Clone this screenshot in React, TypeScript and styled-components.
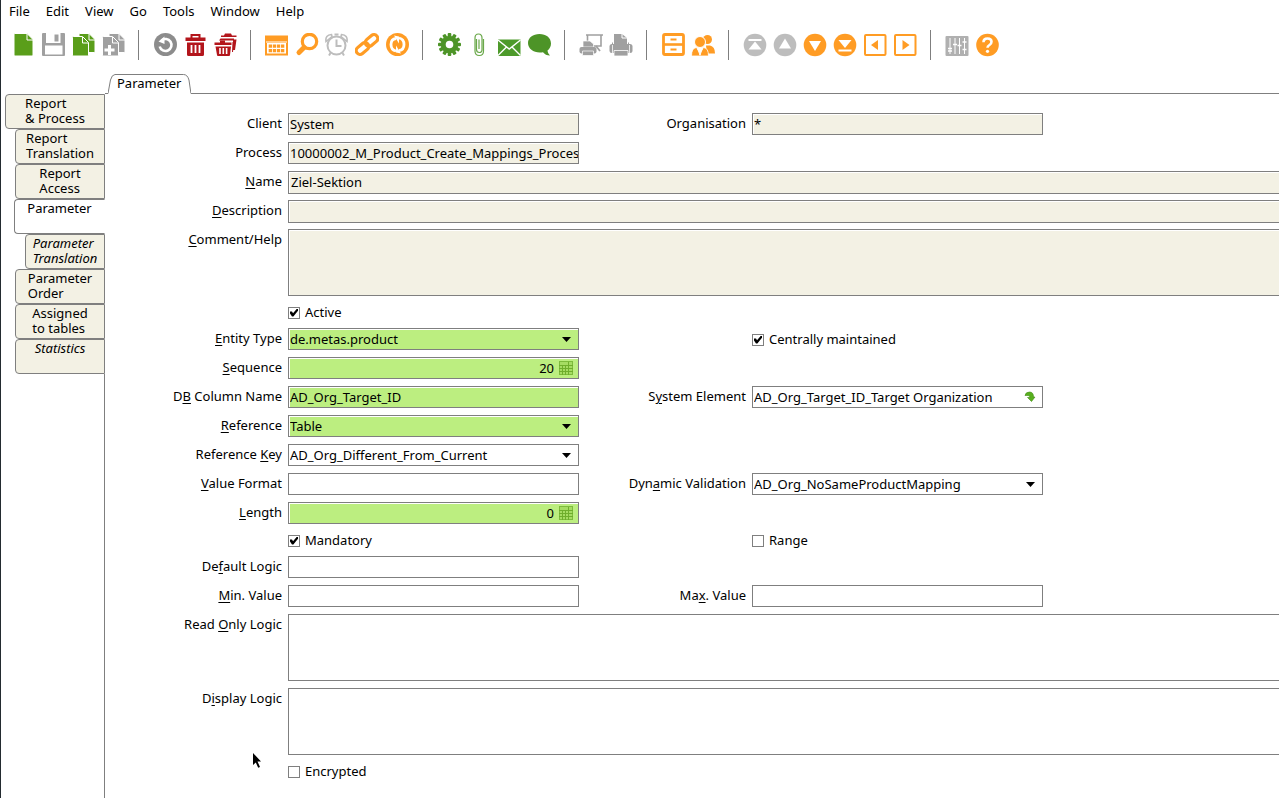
import React, { useId } from "react";
import styled, { createGlobalStyle, css } from "styled-components";

const GREEN = "#5a9e1a";
const ORANGE = "#ff9c24";
const RED = "#b3151b";
const GREY = "#a0a0a0";
const PALE = "#bdbdbd";
const LINE = "#7f7f7f";
const BEIGE = "#f3f1e4";
const LIME = "#bcee80";

const GlobalStyle = createGlobalStyle`
  *, *::before, *::after { box-sizing: border-box; }
  body { margin: 0; background: #fff; overflow-x: hidden; }
  body, button, input, select, textarea {
    font-family: "Noto Sans", "DejaVu Sans", sans-serif;
    font-size: 13px;
    line-height: 15px;
    color: #000;
  }
  u { text-underline-offset: 2px; text-decoration-thickness: 1px; }
`;

const Shell = styled.div`
  display: flex;
  flex-direction: column;
  min-height: 100vh;
  border-left: 1px solid #232b30;
`;

const MenuBar = styled.nav`
  display: flex;
  height: 24px;
`;

const MenuItem = styled.button`
  border: 0;
  background: none;
  padding: 0 8px 2px;
`;

const Toolbar = styled.div`
  display: flex;
  padding: 6px 7px 14px;
`;

const ToolButton = styled.button`
  flex: none;
  display: grid;
  place-items: center;
  width: 30px;
  height: 30px;
  padding: 0;
  border: 0;
  background: none;
`;

const Separator = styled.div`
  flex: none;
  width: 1px;
  height: 30px;
  margin: 0 11px 0 10px;
  background: ${LINE};
`;

const Body = styled.div`
  flex: 1;
  display: flex;
`;

const SideTabs = styled.nav`
  flex: none;
  display: flex;
  flex-direction: column;
  width: 104px;
  padding-top: 20px;
`;

const SideTab = styled.button<{ $indent: number; $active?: boolean; $italic?: boolean }>`
  flex: none;
  display: flex;
  justify-content: center;
  align-items: flex-start;
  height: 35px;
  margin-left: ${(p) => p.$indent}px;
  padding: 1px 0 0;
  border: 1px solid ${LINE};
  border-right-color: ${(p) => (p.$active ? "transparent" : LINE)};
  border-radius: 4px 0 0 4px;
  background: ${(p) => (p.$active ? "#fff" : BEIGE)};
  font-style: ${(p) => (p.$italic ? "italic" : "normal")};
  text-align: left;
  white-space: pre-line;
`;

const SideRule = styled.div`
  flex: 1;
  border-right: 1px solid ${LINE};
`;

const Panel = styled.main`
  flex: 1;
  min-width: 0;
`;

const TabRow = styled.div`
  display: flex;
  height: 20px;
`;

const TabLine = styled.div<{ $grow?: boolean }>`
  flex: ${(p) => (p.$grow ? "1" : "none")};
  width: 3px;
  border-bottom: 1px solid ${LINE};
`;

const TopTab = styled.button`
  position: relative;
  flex: none;
  padding: 0 10px 2px 9px;
  border: 0;
  background: none;
`;

const TabShape = styled.svg`
  position: absolute;
  inset: 0;
  width: 100%;
  height: 100%;
`;

const Form = styled.form`
  display: grid;
  grid-template-columns: 177px 291px 161px 291px minmax(0, 1fr);
  grid-auto-rows: auto;
  gap: 6px;
  padding: 19px 0 12px;
`;

const Label = styled.label<{ $second?: boolean }>`
  grid-column: ${(p) => (p.$second ? 3 : 1)};
  height: 23px;
  line-height: 20px;
  text-align: right;
  white-space: nowrap;
`;

const fieldFrame = css<{ $fill?: string; $second?: boolean; $wide?: boolean }>`
  grid-column: ${(p) => (p.$wide ? "2 / -1" : p.$second ? "4" : "2")};
  width: 100%;
  height: 22px;
  border: 1px solid ${LINE};
  border-radius: 0;
  background: ${(p) => p.$fill ?? "#fff"};
  box-shadow: inset 1px 1px 0 #fff;
  ${(p) => p.$wide && "border-right: 0;"}
`;

const TextInput = styled.input<{ $fill?: string; $second?: boolean; $wide?: boolean }>`
  ${fieldFrame}
  height: ${(p) => (p.$wide ? 23 : 22)}px;
  padding: ${(p) => (p.$wide ? "0 0 2px 2px" : "0 0 0 1px")};
  outline: 0;
`;

const TextBox = styled.textarea<{ $fill?: string }>`
  ${fieldFrame}
  grid-column: 2 / -1;
  height: 67px;
  margin-bottom: 1px;
  border-right: 0;
  resize: none;
  display: block;
`;

const Composite = styled.div<{ $fill?: string; $second?: boolean }>`
  ${fieldFrame}
  position: relative;
  display: flex;
`;

const InnerInput = styled.input<{ $right?: boolean }>`
  flex: 1;
  min-width: 0;
  padding: 0 4px 0 1px;
  border: 0;
  outline: 0;
  background: none;
  text-align: ${(p) => (p.$right ? "right" : "left")};
`;

const FieldButton = styled.button`
  flex: none;
  display: grid;
  place-items: center;
  width: 16px;
  margin-right: 4px;
  padding: 0;
  border: 0;
  background: none;
`;

const InnerSelect = styled.select`
  flex: 1;
  min-width: 0;
  padding: 0 24px 0 1px;
  border: 0;
  border-radius: 0;
  outline: 0;
  background: none;
  appearance: none;
`;

const Arrow = styled.svg`
  position: absolute;
  top: 8px;
  right: 7px;
  pointer-events: none;
`;

const CheckLabel = styled.label<{ $second?: boolean }>`
  grid-column: ${(p) => (p.$second ? 4 : 2)};
  align-self: center;
  display: flex;
  align-items: center;
  gap: 5px;
  height: 19px;
`;

const CheckInput = styled.input`
  appearance: none;
  flex: none;
  display: grid;
  place-items: center;
  width: 12px;
  height: 12px;
  margin: 0;
  border: 1px solid ${LINE};
  background: #fff;
  &:checked::before {
    content: "";
    width: 8px;
    height: 8px;
    background: #000;
    clip-path: polygon(0 38%, 25% 38%, 38% 58%, 88% 0, 100% 0, 100% 28%, 42% 100%, 25% 100%, 0 62%);
  }
`;

const Pointer = styled.svg`
  position: absolute;
  left: 252px;
  top: 753px;
  pointer-events: none;
`;

const page = (x: number, y: number, w: number, h: number, fill: string) => (
  <>
    <path d={`M${x + 1} ${y}h${w - 7}l6 6v${h - 7}q0 1-1 1h${-(w - 2)}q-1 0-1-1v${-(h - 2)}q0-1 1-1z`} fill={fill} stroke="#fff" />
    <path d={`M${x + w - 6} ${y + 0.5}v6h6`} fill="none" stroke="#fff" />
  </>
);

const teeth = (n: number, cx: number, cy: number, color: string) =>
  Array.from({ length: n }, (_, i) => (
    <rect key={i} x={cx - 1.8} y={cy - 11.5} width="3.6" height="6" rx="1" fill={color} transform={`rotate(${(360 / n) * i} ${cx} ${cy})`} />
  ));

const printer = (
  <>
    <path d="M5 11V1h8l5 4v6z" fill={GREY} />
    <path d="M13 1v4h5" fill="none" stroke="#fff" />
    <path d="M3.500 9.500v3M19.500 9.500v3" stroke={GREY} />
    <rect x="0.500" y="11" width="23" height="9" rx="2.500" fill={GREY} />
    <path d="M3.500 12v8M20.500 12v8" stroke="#e8e8e8" />
    <path d="M5 17.500h14v5.500H5z" fill={GREY} stroke="#fff" strokeWidth="0.800" />
  </>
);

const icons: Record<string, React.ReactNode> = {
  New: page(3, 0.5, 19, 22.5, GREEN),
  Save: (
    <>
      <rect x="1" y="0" width="23" height="23" rx="1" fill={GREY} />
      <path d="M5 0h14.500v10H5zM4 12.500h17.500v9H4z" fill="#fff" />
      <path d="M13.500 1.500h4v7h-4z" fill={GREY} />
    </>
  ),
  Copy: (
    <>
      {page(8, 0.5, 16, 19, GREEN)}
      {page(1.5, 3.5, 16, 19.5, GREEN)}
    </>
  ),
  "Copy record": (
    <>
      {page(8, 0.5, 16, 19, GREY)}
      {page(1.5, 3.5, 16, 19.5, GREY)}
      <path d="M8.500 12v10M3.500 17h10" stroke="#fff" strokeWidth="3" />
    </>
  ),
  Undo: (
    <>
      <circle cx="12.500" cy="11.500" r="11.500" fill="#8c8c8c" />
      <path d="M8.500 7.500a6 6 0 1 1-1.800 6" fill="none" stroke="#fff" strokeWidth="2.600" />
      <path d="M5.500 8.500L11.500 3.500V11z" fill="#fff" />
    </>
  ),
  Delete: (
    <>
      <path d="M8.500 5V2h8v3" fill="none" stroke={RED} strokeWidth="2" />
      <path d="M2.500 4.500h20v3.500h-20zM4 9.500h17v12q0 1.500-1.500 1.500h-14Q4 23 4 21.500z" fill={RED} />
      <path d="M8.500 12v8M12.500 12v8M16.500 12v8" stroke="#fff" strokeWidth="1.800" />
    </>
  ),
  "Delete selection": (
    <>
      <path d="M11 2.500L12 0.500h6l1 2h4.500V4H8V2.500zM20 6.500h3.500L22 17h-2z" fill={RED} />
      <path d="M7.500 5.500h13.500v2H6zM19.500 9h1.500l-1 10h-1z" fill={RED} />
      <path d="M7 10V7.500h5V10M1.500 9.500h17V12h-17zM2.500 13.500h15.500l-1 8.500q0 1-1 1h-11q-1 0-1-1z" fill={RED} />
      <path d="M7 15v6M10.300 15v6M13.600 15v6" stroke="#fff" strokeWidth="1.600" />
    </>
  ),
  "Grid toggle": (
    <>
      <path d="M0 2.500h23v20H0zM2 10v10.500h19V10z" fill={ORANGE} fillRule="evenodd" />
      <path d="M1 9h21" stroke="#fff" />
      {[3.7, 7.8, 11.9, 16].map((x) => (
        <path key={x} d={`M${x} 11.500h3.300v3.300h-3.300zM${x} 16h3.300v3.300h-3.300z`} fill={ORANGE} />
      ))}
    </>
  ),
  Find: (
    <>
      <circle cx="14.500" cy="8.500" r="7.200" fill="none" stroke={ORANGE} strokeWidth="3.200" />
      <path d="M9 14.500L4 19.500" stroke={ORANGE} strokeWidth="5" strokeLinecap="round" />
    </>
  ),
  History: (
    <g fill="none" stroke={PALE}>
      <circle cx="11.500" cy="12.500" r="9" strokeWidth="2" />
      <path d="M11.500 6.500V13h5" strokeWidth="2" />
      <path d="M1 8.500Q0 2 6.500 1.500L7 3.500zM22 8.500Q23 2 16.500 1.500L16 3.500z" strokeWidth="1.600" />
      <path d="M5.500 20L4 22.500M17.500 20l1.500 2.500M9.500 1.500h4" strokeWidth="2" />
    </g>
  ),
  "Zoom across": (
    <g fill="none" stroke={ORANGE} strokeWidth="3.200">
      <rect x="-7" y="-3.800" width="14" height="7.600" rx="3.800" transform="translate(7.500 15.500) rotate(-40)" />
      <rect x="-7" y="-3.800" width="14" height="7.600" rx="3.800" transform="translate(16.500 7.500) rotate(-40)" />
    </g>
  ),
  Refresh: (
    <>
      <circle cx="12.500" cy="11.500" r="11.500" fill={ORANGE} />
      <path d="M11 18Q6 17 6 11.500T11 5.500M14 5Q19 6 19 11.500T14 17.500" fill="none" stroke="#fff" strokeWidth="2.800" />
      <path d="M9 2.500l5 1v7zM16 20.500l-5-1v-7z" fill="#fff" />
    </>
  ),
  Process: (
    <>
      {teeth(12, 12.5, 11.5, "#4d9427")}
      <circle cx="12.500" cy="11.500" r="6.300" fill="none" stroke="#4d9427" strokeWidth="5" />
    </>
  ),
  Attachment: (
    <path d="M9.500 6v10.500q0 3 2.800 3t2.700-3V5q0-4-3.500-4T8 5v13q0 4.500 4.300 4.500T16.500 18V6M12 6.500V16" fill="none" stroke="#6aa84a" strokeWidth="1.200" />
  ),
  Mail: (
    <>
      <path d="M1 6.500h22.500V23H1z" fill="#4d9a2a" />
      <path d="M1 7l11.200 9L23.500 7M1 22.500l8.500-8.500M23.500 22.500L15 14" fill="none" stroke="#fff" strokeWidth="1.400" />
    </>
  ),
  Chat: (
    <path d="M12.500 1C19 1 24 4.800 24 10.500c0 3-1.500 5.500-3.500 7 .3 2 1 3.500 2.500 5-3 0-5.500-1.300-7-3.300-8 1.500-15-2.700-15-9.200C1 4.800 6 1 12.500 1z" fill="#4d9427" />
  ),
  "Print preview": (
    <>
      <path d="M8.500 2v11h13.500V2M7 2h17" fill="none" stroke={GREY} strokeWidth="1.600" />
      <path d="M17 13l4 5" stroke={GREY} strokeWidth="1.800" />
      <path d="M4 14V8h7l3.500 3v3z" fill={GREY} stroke="#fff" strokeWidth="0.700" />
      <rect x="0.500" y="14" width="17" height="6.500" rx="2" fill={GREY} />
      <path d="M3.500 18h11v4.500h-11z" fill={GREY} stroke="#fff" strokeWidth="0.700" />
    </>
  ),
  Print: printer,
  Archive: (
    <>
      <rect x="2.500" y="1.500" width="20" height="20" rx="1.500" fill="none" stroke={ORANGE} strokeWidth="2.800" />
      <path d="M2 11.500h21" stroke={ORANGE} strokeWidth="2.600" />
      <path d="M9.500 6.500h6M9.500 16.500h6" stroke={ORANGE} strokeWidth="2" />
    </>
  ),
  "Business partner": (
    <>
      <circle cx="16.500" cy="6.500" r="4.500" fill={ORANGE} />
      <path d="M15 12.500h4q5 1 5 8h-8z" fill={ORANGE} />
      <circle cx="9" cy="9" r="5.500" fill={ORANGE} stroke="#fff" />
      <path d="M0.500 23q0-8 5-8.500L9 20l3.500-5.500q5 .5 5 8.500z" fill={ORANGE} stroke="#fff" strokeWidth="0.800" />
      <path d="M9 15.500v7M6.500 15.500L9 22l2.500-6.500" stroke="#fff" strokeWidth="0.900" fill="none" />
    </>
  ),
  First: (
    <>
      <circle cx="12" cy="12" r="11.300" fill={PALE} />
      <path d="M5.500 7h13" stroke="#fff" strokeWidth="2" />
      <path d="M12 8.500l6.500 8h-13z" fill="#fff" />
    </>
  ),
  Previous: (
    <>
      <circle cx="12" cy="12" r="11.300" fill={PALE} />
      <path d="M12 5.500l6 10H6z" fill="#fff" />
    </>
  ),
  Next: (
    <>
      <circle cx="12" cy="12" r="11.300" fill={ORANGE} />
      <path d="M12 18L6 8h12z" fill="#fff" />
    </>
  ),
  Last: (
    <>
      <circle cx="12" cy="12" r="11.300" fill={ORANGE} />
      <path d="M5.500 17.500h13" stroke="#fff" strokeWidth="2" />
      <path d="M12 15L5.500 7h13z" fill="#fff" />
    </>
  ),
  Parent: (
    <>
      <rect x="2" y="2" width="20.500" height="20" rx="1" fill="none" stroke={ORANGE} strokeWidth="2" />
      <path d="M8 12l7-5v10z" fill={ORANGE} />
    </>
  ),
  Detail: (
    <>
      <rect x="2" y="2" width="20.500" height="20" rx="1" fill="none" stroke={ORANGE} strokeWidth="2" />
      <path d="M16.500 12l-7-5v10z" fill={ORANGE} />
    </>
  ),
  Preferences: (
    <>
      <rect x="0.500" y="3" width="23" height="20" rx="1" fill="#b0b0b0" />
      <path d="M5 5v16M10 5v16M14.500 5v16M19.500 5v16" stroke="#fff" strokeWidth="1" />
      <path d="M3 15.500h4M8 11.500h4M12.500 12.500h4M17.500 16.500h4M3 18h4M17.500 9h4" stroke="#fff" strokeWidth="1.500" />
    </>
  ),
  Help: (
    <>
      <circle cx="12.500" cy="12" r="11.300" fill={ORANGE} />
      <path d="M8.500 9.300q0-3.800 4-3.800t4 3.300q0 2-2 3.200t-2 2.800" fill="none" stroke="#fff" strokeWidth="2.600" />
      <circle cx="12.500" cy="18.300" r="1.600" fill="#fff" />
    </>
  ),
};

const toolGroups = [
  ["New", "Save", "Copy", "Copy record"],
  ["Undo", "Delete", "Delete selection"],
  ["Grid toggle", "Find", "History", "Zoom across", "Refresh"],
  ["Process", "Attachment", "Mail", "Chat"],
  ["Print preview", "Print"],
  ["Archive", "Business partner"],
  ["First", "Previous", "Next", "Last", "Parent", "Detail"],
  ["Preferences", "Help"],
];

const sideTabs = [
  { text: "Report\n& Process", indent: 4 },
  { text: "Report\nTranslation", indent: 14 },
  { text: "Report\nAccess", indent: 14 },
  { text: "Parameter", indent: 13, active: true },
  { text: "Parameter\nTranslation", indent: 24, italic: true },
  { text: "Parameter\nOrder", indent: 14 },
  { text: "Assigned\nto tables", indent: 14 },
  { text: "Statistics", indent: 14, italic: true },
];

/* The letter after "~" is the keyboard mnemonic and is underlined. */
const Caption = ({ text }: { text: string }) => {
  const at = text.indexOf("~");
  if (at < 0) return <>{text}</>;
  return (
    <>
      {text.slice(0, at)}
      <u>{text[at + 1]}</u>
      {text.slice(at + 2)}
    </>
  );
};

type FieldProps = { label: string; value?: string; fill?: string; second?: boolean; wide?: boolean };

const TextField = ({ label, value = "", fill, second, wide }: FieldProps) => {
  const id = useId();
  return (
    <>
      <Label htmlFor={id} $second={second}><Caption text={label} /></Label>
      <TextInput id={id} defaultValue={value} $fill={fill} $second={second} $wide={wide} />
    </>
  );
};

const AreaField = ({ label, fill }: FieldProps) => {
  const id = useId();
  return (
    <>
      <Label htmlFor={id}><Caption text={label} /></Label>
      <TextBox id={id} $fill={fill} />
    </>
  );
};

const SelectField = ({ label, value = "", fill, second }: FieldProps) => {
  const id = useId();
  return (
    <>
      <Label htmlFor={id} $second={second}><Caption text={label} /></Label>
      <Composite $fill={fill} $second={second}>
        <InnerSelect id={id}><option>{value}</option></InnerSelect>
        <Arrow width="9" height="5" viewBox="0 0 9 5"><path d="M0 0h9L4.500 5z" /></Arrow>
      </Composite>
    </>
  );
};

const NumberField = ({ label, value = "" }: FieldProps) => {
  const id = useId();
  return (
    <>
      <Label htmlFor={id}><Caption text={label} /></Label>
      <Composite $fill={LIME}>
        <InnerInput id={id} defaultValue={value} $right />
        <FieldButton type="button" aria-label="Calculator">
          <svg width="16" height="16" viewBox="0 0 16 16">
            <rect x="1.500" y="1.500" width="13" height="13" fill="#a5dc62" stroke="#7dbb3c" />
            <path d="M1 5.500h14M1 8.500h14M1 11.500h14M4.500 5v10M7.500 5v10M10.500 5v10M10.500 2v3" stroke="#6fae2c" />
          </svg>
        </FieldButton>
      </Composite>
    </>
  );
};

const LookupField = ({ label, value = "" }: FieldProps) => {
  const id = useId();
  return (
    <>
      <Label htmlFor={id} $second><Caption text={label} /></Label>
      <Composite $second>
        <InnerInput id={id} defaultValue={value} />
        <FieldButton type="button" aria-label="Look up">
          <svg width="12" height="12" viewBox="0 0 12 12">
            <path d="M1 4.500Q1.500 1 5.500 1T9.500 6H11L7.500 10.500 3.500 6.500H6Q6 4.500 4 4.500T1 4.500z" fill="#58b01e" stroke="#3f8a12" strokeWidth="0.600" />
          </svg>
        </FieldButton>
      </Composite>
    </>
  );
};

const CheckField = ({ label, checked, second }: { label: string; checked?: boolean; second?: boolean }) => (
  <CheckLabel $second={second}>
    <CheckInput type="checkbox" defaultChecked={checked} />
    {label}
  </CheckLabel>
);

export default function App() {
  return (
    <Shell>
      <GlobalStyle />
      <MenuBar>
        {["File", "Edit", "View", "Go", "Tools", "Window", "Help"].map((m) => (
          <MenuItem key={m}>{m}</MenuItem>
        ))}
      </MenuBar>
      <Toolbar>
        {toolGroups.map((group, i) => (
          <React.Fragment key={i}>
            {i > 0 && <Separator />}
            {group.map((name) => (
              <ToolButton key={name} aria-label={name}>
                <svg width="24" height="24" viewBox="0 0 24 24">{icons[name]}</svg>
              </ToolButton>
            ))}
          </React.Fragment>
        ))}
      </Toolbar>
      <Body>
        <SideTabs>
          {sideTabs.map((t) => (
            <SideTab key={t.text} $indent={t.indent} $active={t.active} $italic={t.italic}>
              {t.text}
            </SideTab>
          ))}
          <SideRule />
        </SideTabs>
        <Panel>
          <TabRow>
            <TabLine />
            <TopTab>
              <TabShape viewBox="0 0 84 20" preserveAspectRatio="none">
                <path d="M0 19.500L2.500 6Q4 .5 7 .5H76Q80 .5 81.500 6L83.500 19.500" fill="none" stroke={LINE} vectorEffect="non-scaling-stroke" />
              </TabShape>
              Parameter
            </TopTab>
            <TabLine $grow />
          </TabRow>
          <Form>
            <TextField label="Client" value="System" fill={BEIGE} />
            <TextField label="Organisation" value="*" fill={BEIGE} second />
            <TextField label="Process" value="10000002_M_Product_Create_Mappings_Process" fill={BEIGE} />
            <TextField label="~Name" value="Ziel-Sektion" fill={BEIGE} wide />
            <TextField label="~Description" fill={BEIGE} wide />
            <AreaField label="~Comment/Help" fill={BEIGE} />
            <CheckField label="Active" checked />
            <SelectField label="~Entity Type" value="de.metas.product" fill={LIME} />
            <CheckField label="Centrally maintained" checked second />
            <NumberField label="~Sequence" value="20" />
            <TextField label="D~B Column Name" value="AD_Org_Target_ID" fill={LIME} />
            <LookupField label="S~ystem Element" value="AD_Org_Target_ID_Target Organization" />
            <SelectField label="~Reference" value="Table" fill={LIME} />
            <SelectField label="Reference ~Key" value="AD_Org_Different_From_Current" />
            <TextField label="~Value Format" />
            <SelectField label="Dyn~amic Validation" value="AD_Org_NoSameProductMapping" second />
            <NumberField label="~Length" value="0" />
            <CheckField label="Mandatory" checked />
            <CheckField label="Range" second />
            <TextField label="De~fault Logic" />
            <TextField label="~Min. Value" />
            <TextField label="Ma~x. Value" second />
            <AreaField label="Read ~Only Logic" />
            <AreaField label="D~isplay Logic" />
            <CheckField label="Encrypted" />
          </Form>
        </Panel>
      </Body>
      <Pointer width="10" height="16" viewBox="0 0 10 16">
        <path d="M1 0L9 8.500H5.500L8 14l-1.800.8L3.800 9.500 1 12z" />
      </Pointer>
    </Shell>
  );
}
